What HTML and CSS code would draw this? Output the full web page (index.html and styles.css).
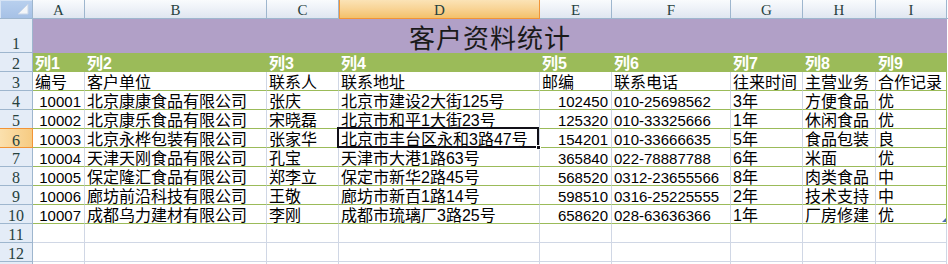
FILE: index.html
```html
<!DOCTYPE html>
<html lang="zh">
<head>
<meta charset="utf-8">
<title>客户资料统计</title>
<link rel="stylesheet" href="styles.css">
</head>
<body>
<div class="sheet">
  <div class="corner"><svg width="12" height="12" viewBox="0 0 12 12"><polygon points="11,1 11,11 1,11" fill="#f4f6f9" stroke="#c9d6e8" stroke-width="1"/></svg></div>
  <div class="ch">A</div><div class="ch">B</div><div class="ch">C</div><div class="ch sel">D</div><div class="ch">E</div><div class="ch">F</div><div class="ch">G</div><div class="ch">H</div><div class="ch">I</div><div class="ch x"></div>

  <div class="rh r1">1</div><div class="title">客户资料统计</div><div class="x"></div>

  <div class="rh">2</div>
  <div class="hd">列1</div><div class="hd">列2</div><div class="hd">列3</div><div class="hd">列4</div><div class="hd">列5</div><div class="hd">列6</div><div class="hd">列7</div><div class="hd">列8</div><div class="hd last">列9</div><div class="x"></div>

  <div class="rh">3</div>
  <div class="td">编号</div><div class="td">客户单位</div><div class="td">联系人</div><div class="td">联系地址</div><div class="td">邮编</div><div class="td">联系电话</div><div class="td">往来时间</div><div class="td">主营业务</div><div class="td last">合作记录</div><div class="x"></div>

  <div class="rh">4</div>
  <div class="td num">10001</div><div class="td">北京康康食品有限公司</div><div class="td">张庆</div><div class="td">北京市建设2大街125号</div><div class="td num">102450</div><div class="td tel">010-25698562</div><div class="td">3年</div><div class="td">方便食品</div><div class="td last">优</div><div class="x"></div>

  <div class="rh">5</div>
  <div class="td num">10002</div><div class="td">北京康乐食品有限公司</div><div class="td">宋晓磊</div><div class="td">北京市和平1大街23号</div><div class="td num">125320</div><div class="td tel">010-33325666</div><div class="td">1年</div><div class="td">休闲食品</div><div class="td last">优</div><div class="x"></div>

  <div class="rh sel">6</div>
  <div class="td num">10003</div><div class="td">北京永桦包装有限公司</div><div class="td">张家华</div><div class="td active">北京市丰台区永和3路47号<span class="outline"></span><span class="handle"></span></div><div class="td num">154201</div><div class="td tel">010-33666635</div><div class="td">5年</div><div class="td">食品包装</div><div class="td last">良</div><div class="x"></div>

  <div class="rh">7</div>
  <div class="td num">10004</div><div class="td">天津天刚食品有限公司</div><div class="td">孔宝</div><div class="td">天津市大港1路63号</div><div class="td num">365840</div><div class="td tel">022-78887788</div><div class="td">6年</div><div class="td">米面</div><div class="td last">优</div><div class="x"></div>

  <div class="rh">8</div>
  <div class="td num">10005</div><div class="td">保定隆汇食品有限公司</div><div class="td">郑李立</div><div class="td">保定市新华2路45号</div><div class="td num">568520</div><div class="td tel">0312-23655566</div><div class="td">8年</div><div class="td">肉类食品</div><div class="td last">中</div><div class="x"></div>

  <div class="rh">9</div>
  <div class="td num">10006</div><div class="td">廊坊前沿科技有限公司</div><div class="td">王敬</div><div class="td">廊坊市新百1路14号</div><div class="td num">598510</div><div class="td tel">0316-25225555</div><div class="td">2年</div><div class="td">技术支持</div><div class="td last">中</div><div class="x"></div>

  <div class="rh">10</div>
  <div class="td num">10007</div><div class="td">成都乌力建材有限公司</div><div class="td">李刚</div><div class="td">成都市琉璃厂3路25号</div><div class="td num">658620</div><div class="td tel">028-63636366</div><div class="td">1年</div><div class="td">厂房修建</div><div class="td last resize">优<span class="grip"></span></div><div class="x"></div>

  <div class="rh">11</div>
  <div class="e"></div><div class="e"></div><div class="e"></div><div class="e"></div><div class="e"></div><div class="e"></div><div class="e"></div><div class="e"></div><div class="e"></div><div class="x"></div>

  <div class="rh">12</div>
  <div class="e"></div><div class="e"></div><div class="e"></div><div class="e"></div><div class="e"></div><div class="e"></div><div class="e"></div><div class="e"></div><div class="e"></div><div class="x"></div>

  <div class="rh"></div>
  <div class="e"></div><div class="e"></div><div class="e"></div><div class="e"></div><div class="e"></div><div class="e"></div><div class="e"></div><div class="e"></div><div class="e"></div><div class="x"></div>
</div>
</body>
</html>
```
FILE: styles.css
```css
html, body {
  margin: 0;
  padding: 0;
  background: #ffffff;
}

.sheet {
  display: grid;
  grid-template-columns: 33px 52px 182px 72px 201px 72px 119px 72px 73px 71px 1fr;
  grid-template-rows: 19px 34px;
  grid-auto-rows: 19px;
  width: 948px;
  height: 264px;
  overflow: hidden;
  font-family: "Liberation Sans", "Noto Sans CJK SC", sans-serif;
  font-size: 16px;
  color: #000;
}

.sheet > div {
  box-sizing: border-box;
  white-space: nowrap;
  min-width: 0;
}

.corner {
  background: linear-gradient(#b9d0ee, #a6c1e6);
  border-right: 1px solid #9eb6ce;
  border-bottom: 1px solid #9eb6ce;
  box-shadow: inset 1px 1px 0 #d7e4f5;
  display: flex;
  align-items: flex-end;
  justify-content: flex-end;
  padding: 0 3px 3px 0;
}

.corner svg { display: block; }

.ch {
  background: linear-gradient(#f9fbfd 0%, #eef2f8 45%, #dfe6f0 100%);
  border-right: 1px solid #9eb6ce;
  border-bottom: 1px solid #9eb6ce;
  font-family: "Liberation Serif", serif;
  font-size: 15px;
  color: #27413e;
  text-align: center;
  padding-top: 2px;
  line-height: 17px;
}

.ch.sel {
  background: linear-gradient(#fbe3b6 0%, #f8d394 50%, #f3c16a 100%);
  border: 1px solid #f29436;
  border-top: none;
}

.ch.x {
  border-right: none;
}

.rh {
  background: #e4ecf7;
  border-right: 1px solid #9eb6ce;
  border-bottom: 1px solid #9eb6ce;
  font-family: "Liberation Serif", serif;
  font-size: 16px;
  color: #27413e;
  text-align: center;
  padding-top: 3px;
  line-height: 16px;
}

.rh.r1 {
  padding-top: 17px;
}

.rh.sel {
  background: linear-gradient(90deg, #fbe0ad, #f6cb82);
  border: 1px solid #f29436;
  border-left: none;
  margin-top: -1px;
  height: 20px;
  padding-top: 4px;
}

.title {
  grid-column: 2 / 11;
  background: #b1a0c7;
  font-size: 26px;
  color: #1a1a1a;
  text-align: center;
  padding-top: 6px;
  line-height: 29px;
  letter-spacing: 1px;
}

.hd {
  background: #9bbb59;
  color: #ffffff;
  font-weight: bold;
  padding-left: 2px;
  padding-top: 1px;
  line-height: 19px;
  border-bottom: 1px solid #9bbb59;
}

.td {
  background: #ffffff;
  border-right: 1px solid #d0d7e5;
  border-bottom: 1px solid #9bbb59;
  padding-left: 2px;
  padding-top: 1px;
  line-height: 19px;
}

.td.num {
  text-align: right;
  padding: 2px 3px 0 0;
  font-size: 15px;
  line-height: 18px;
}

.td.tel {
  font-size: 15px;
  padding-top: 2px;
  line-height: 18px;
}

.td.last {
  border-right: 1px solid #9bbb59;
}

.hd.last {
  border-right: 1px solid #9bbb59;
}

.e {
  border-right: 1px solid #d0d7e5;
  border-bottom: 1px solid #d0d7e5;
}

.x {
  background: #ffffff;
}

.active {
  position: relative;
}

.outline {
  position: absolute;
  left: -2px;
  top: -2px;
  right: 0;
  bottom: -1px;
  border: 2px solid #111018;
  pointer-events: none;
}

.handle {
  position: absolute;
  right: -2px;
  bottom: -3px;
  width: 5px;
  height: 5px;
  background: #111018;
  border: 1px solid #ffffff;
  box-sizing: border-box;
}

.resize {
  position: relative;
}

.grip {
  position: absolute;
  right: 0;
  bottom: 1px;
  width: 0;
  height: 0;
  border-left: 4px solid transparent;
  border-bottom: 4px solid #4a6bb0;
}
```
